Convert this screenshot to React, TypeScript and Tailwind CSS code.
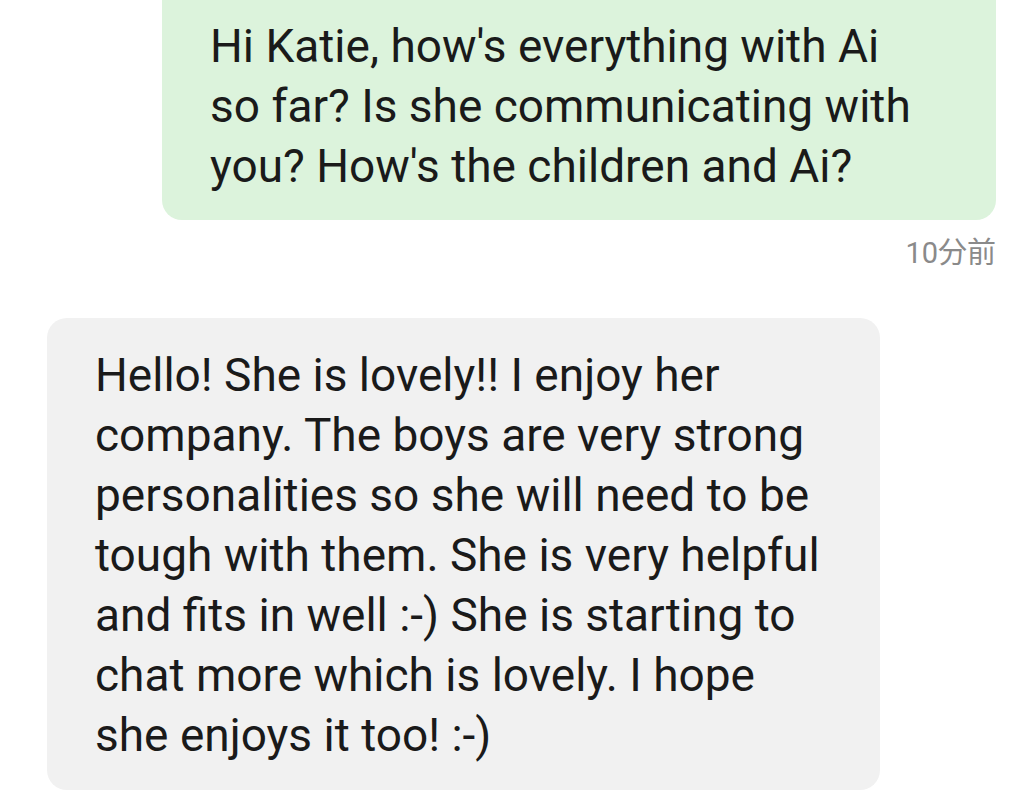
export default function App() {
  const sent = ["Hi Katie, how's everything with Ai", "so far? Is she communicating with", "you? How's the children and Ai?"]
  const received = [
    "Hello! She is lovely!! I enjoy her",
    "company. The boys are very strong",
    "personalities so she will need to be",
    "tough with them. She is very helpful",
    "and fits in well :-) She is starting to",
    "chat more which is lovely. I hope",
    "she enjoys it too! :-)",
  ]

  return (
    <div
      className="w-[1024px] h-[796px] overflow-hidden bg-white flex flex-col"
      style={{ fontFamily: "Roboto, 'Noto Sans CJK JP', sans-serif" }}
    >
      <div className="flex flex-col items-end pr-[28px]">
        <div className="w-[834px] bg-[#dcf3dc] rounded-b-[20px] pl-[48px] pt-[16px] pb-[24px] text-[46px] leading-[60px] text-[#1a1a1a]">
          {sent.map((line) => (
            <div key={line} className="whitespace-nowrap">{line}</div>
          ))}
        </div>
        <div className="mt-[16px] text-[29px] leading-[34px] text-[#8a8a8a]">10分前</div>
      </div>

      <div className="pl-[47px] mt-[48px]">
        <div className="w-[833px] bg-[#f1f1f1] rounded-[20px] pl-[48px] pt-[27px] pb-[25px] text-[46px] leading-[60px] text-[#1a1a1a]">
          {received.map((line) => (
            <div key={line} className="whitespace-nowrap">{line}</div>
          ))}
        </div>
      </div>
    </div>
  )
}
